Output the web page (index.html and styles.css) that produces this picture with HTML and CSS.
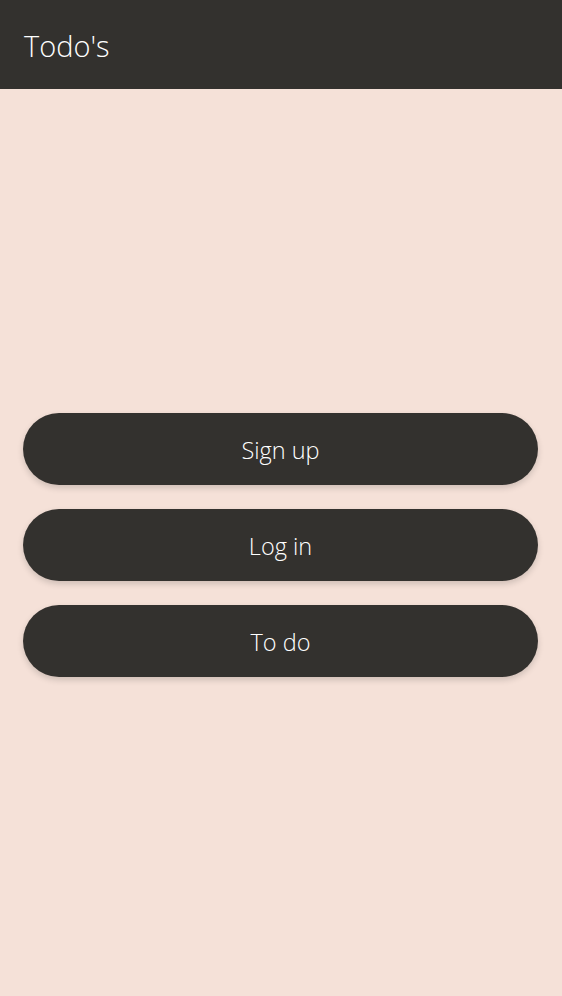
FILE: index.html
```html
<!DOCTYPE html>
<html>
<head>
<meta charset="utf-8">
<link rel="stylesheet" href="styles.css">
</head>
<body>
<header class="bar"><h1 class="title">Todo's</h1></header>
<main class="content">
  <div class="buttons">
    <button class="btn">Sign up</button>
    <button class="btn">Log in</button>
    <button class="btn">To do</button>
  </div>
</main>
</body>
</html>
```
FILE: styles.css
```css
html, body { margin: 0; padding: 0; height: 100%; }
body {
  background: #f5e1d8;
  font-family: "Open Sans", "Noto Sans", sans-serif;
  display: flex;
  flex-direction: column;
}
.bar {
  background: #33312e;
  height: 89px;
  display: flex;
  align-items: center;
  padding: 0 24px;
  box-sizing: border-box;
  flex: none;
}
.title {
  margin: 0;
  color: #fff;
  font-weight: 300;
  font-size: 29px;
  padding-top: 2px;
}
.content {
  flex: 1;
  display: flex;
  flex-direction: column;
  justify-content: center;
  padding: 0 24px 0 23px;
}
.buttons {
  display: flex;
  flex-direction: column;
  gap: 24px;
  margin-top: 4px;
}
.btn {
  height: 72px;
  border: none;
  border-radius: 36px;
  background: #33312e;
  color: #fff;
  font-family: inherit;
  font-weight: 300;
  font-size: 23.5px;
  box-shadow: 0 3px 6px rgba(0,0,0,0.16);
  padding: 3px 0 0;
}
```
